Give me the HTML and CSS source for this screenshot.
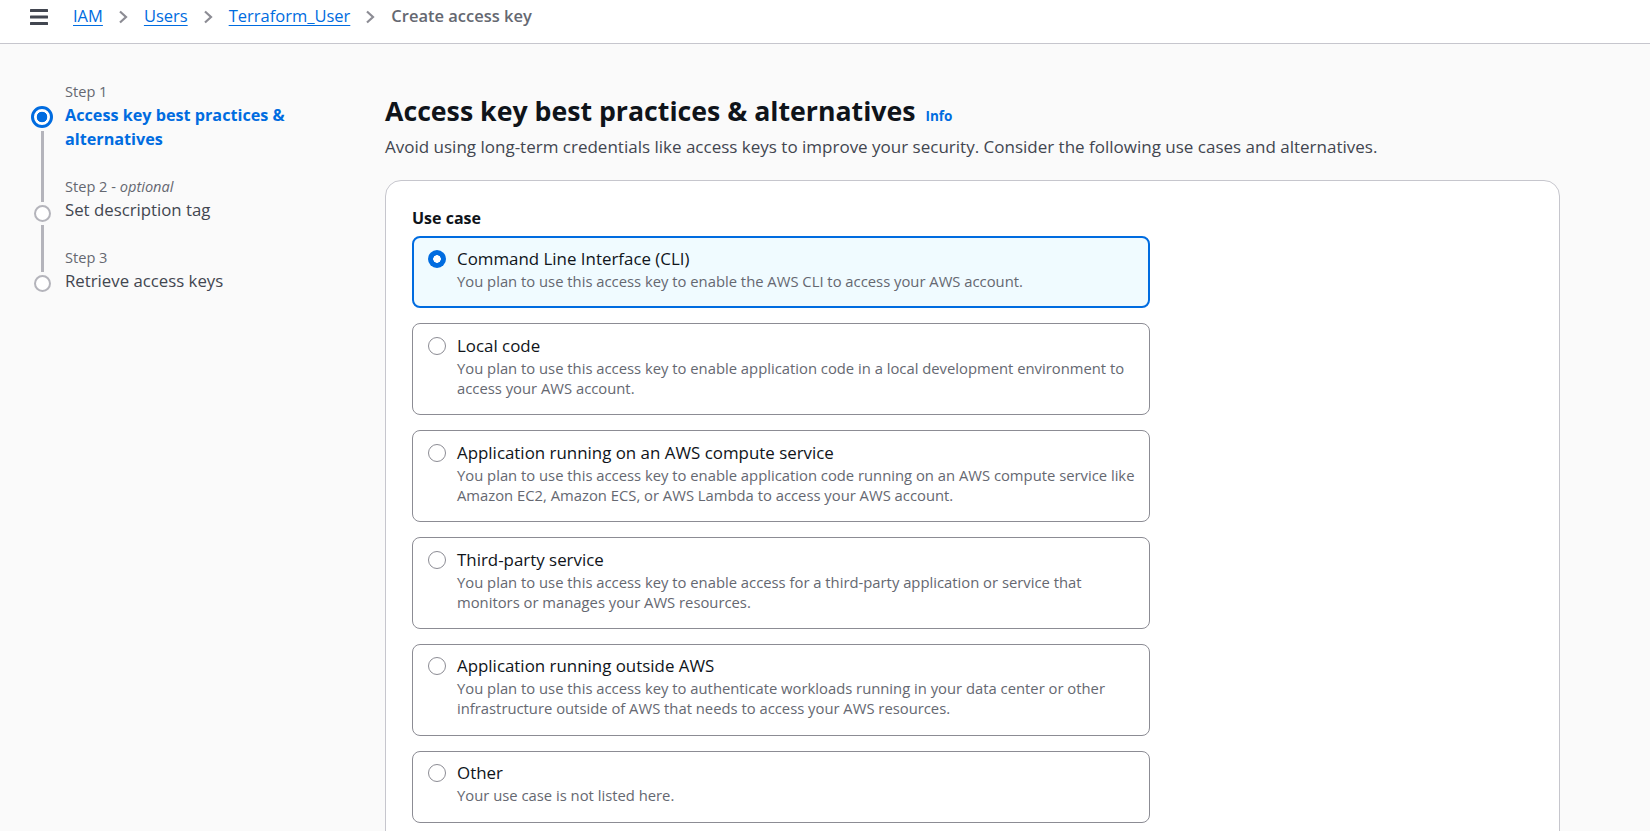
FILE: index.html
```html
<!DOCTYPE html>
<html lang="en">
<head>
<meta charset="utf-8">
<title>Create access key</title>
<link rel="stylesheet" href="styles.css">
</head>
<body>
<header class="topbar">
  <button class="menu" aria-label="Open navigation">
    <svg width="18" height="16" viewBox="0 0 18 16"><rect x="0" y="0" width="18" height="3" rx="0.5"/><rect x="0" y="6.5" width="18" height="3" rx="0.5"/><rect x="0" y="13" width="18" height="3" rx="0.5"/></svg>
  </button>
  <nav class="crumbs">
    <a class="crumb-link" href="#">IAM</a>
    <svg class="sep" viewBox="0 0 10 14"><polyline points="2,1.5 8,7 2,12.5"/></svg>
    <a class="crumb-link" href="#">Users</a>
    <svg class="sep" viewBox="0 0 10 14"><polyline points="2,1.5 8,7 2,12.5"/></svg>
    <a class="crumb-link" href="#">Terraform_User</a>
    <svg class="sep" viewBox="0 0 10 14"><polyline points="2,1.5 8,7 2,12.5"/></svg>
    <span class="crumb-current">Create access key</span>
  </nav>
</header>

<div class="layout">
  <aside class="steps">
    <ol>
      <li class="step step-active">
        <div class="ind"><span class="seg-up seg-hidden"></span><span class="dot"></span><span class="seg-down"></span></div>
        <div class="txt">
          <div class="step-label">Step 1</div>
          <div class="step-title">Access key best practices &amp; alternatives</div>
        </div>
      </li>
      <li class="step">
        <div class="ind"><span class="seg-up"></span><span class="dot"></span><span class="seg-down"></span></div>
        <div class="txt">
          <div class="step-label">Step 2 - <i>optional</i></div>
          <div class="step-title">Set description tag</div>
        </div>
      </li>
      <li class="step step-last">
        <div class="ind"><span class="seg-up seg-up-last"></span><span class="dot"></span></div>
        <div class="txt">
          <div class="step-label">Step 3</div>
          <div class="step-title">Retrieve access keys</div>
        </div>
      </li>
    </ol>
  </aside>

  <main class="content">
    <h1 class="page-title"><span>Access key best practices &amp; alternatives</span><a class="info" href="#">Info</a></h1>
    <p class="page-desc">Avoid using long-term credentials like access keys to improve your security. Consider the following use cases and alternatives.</p>

    <section class="panel">
      <div class="field-label">Use case</div>
      <div class="tiles">
        <label class="tile tile-selected">
          <span class="radio"></span>
          <span class="tile-text">
            <span class="tile-title">Command Line Interface (CLI)</span>
            <span class="tile-desc">You plan to use this access key to enable the AWS CLI to access your AWS account.</span>
          </span>
        </label>
        <label class="tile">
          <span class="radio"></span>
          <span class="tile-text">
            <span class="tile-title">Local code</span>
            <span class="tile-desc">You plan to use this access key to enable application code in a local development environment to access your AWS account.</span>
          </span>
        </label>
        <label class="tile">
          <span class="radio"></span>
          <span class="tile-text">
            <span class="tile-title">Application running on an AWS compute service</span>
            <span class="tile-desc">You plan to use this access key to enable application code running on an AWS compute service like Amazon EC2, Amazon ECS, or AWS Lambda to access your AWS account.</span>
          </span>
        </label>
        <label class="tile">
          <span class="radio"></span>
          <span class="tile-text">
            <span class="tile-title">Third-party service</span>
            <span class="tile-desc">You plan to use this access key to enable access for a third-party application or service that monitors or manages your AWS resources.</span>
          </span>
        </label>
        <label class="tile">
          <span class="radio"></span>
          <span class="tile-text">
            <span class="tile-title">Application running outside AWS</span>
            <span class="tile-desc">You plan to use this access key to authenticate workloads running in your data center or other infrastructure outside of AWS that needs to access your AWS resources.</span>
          </span>
        </label>
        <label class="tile">
          <span class="radio"></span>
          <span class="tile-text">
            <span class="tile-title">Other</span>
            <span class="tile-desc">Your use case is not listed here.</span>
          </span>
        </label>
      </div>
    </section>
  </main>
</div>
</body>
</html>
```

FILE: styles.css
```css
* { box-sizing: border-box; }

html { overflow: hidden; }

body {
  margin: 0;
  font-family: "Open Sans", "Noto Sans", sans-serif;
  background: #fafafa;
  color: #0f141a;
}

/* ---------- top bar ---------- */
.topbar {
  display: flex;
  align-items: flex-start;
  height: 44px;
  padding: 4px 0 0 30px;
  background: #ffffff;
  border-bottom: 1px solid #c6c6cd;
}

.menu {
  display: block;
  width: 18px;
  height: 16px;
  margin-top: 5px;
  padding: 0;
  border: 0;
  background: none;
}
.menu svg { display: block; fill: #424650; }

.crumbs {
  display: flex;
  align-items: flex-start;
  margin-left: 25px;
  font-size: 16.5px;
  line-height: 24px;
}

.crumb-link {
  color: #006ce0;
  text-decoration: underline;
  text-underline-offset: 3px;
  text-decoration-thickness: 1px;
}

.sep {
  width: 10px;
  height: 14px;
  margin: 6px 16px 0 15px;
  fill: none;
  stroke: #8c8c94;
  stroke-width: 2.2;
}

.crumb-current {
  color: #656871;
  font-weight: 600;
}

/* ---------- layout ---------- */
.layout {
  display: grid;
  grid-template-columns: 385px 1fr;
  padding-right: 90px;
}

/* ---------- steps ---------- */
.steps { padding: 35.4px 0 0 30px; }

.steps ol {
  list-style: none;
  margin: 0;
  padding: 0;
  width: 290px;
}

.step { display: flex; }

.ind {
  flex: 0 0 24px;
  display: flex;
  flex-direction: column;
  align-items: center;
  margin-right: 11px;
}

.seg-up {
  width: 3px;
  height: 27.4px;
  margin-bottom: 3px;
  background: #b4b4bb;
}
.seg-up-last { height: 26.4px; }
.seg-hidden { background: transparent; height: 26.4px; margin-bottom: 0; }

.seg-down {
  flex: 1;
  width: 3px;
  margin-top: 3px;
  background: #b4b4bb;
}

.dot {
  width: 17px;
  height: 17px;
  border: 2px solid #b4b4bb;
  border-radius: 50%;
  background: #ffffff;
}

.step-active .dot {
  width: 22px;
  height: 22px;
  border: 3px solid #006ce0;
  background: radial-gradient(circle, #006ce0 0 5px, #ffffff 5.6px);
}

.txt {
  flex: 1;
  padding-bottom: 23px;
}
.step-last .txt { padding-bottom: 0; }

.step-label {
  font-size: 14.6px;
  line-height: 24px;
  color: #656871;
}

.step-title {
  font-size: 16.8px;
  line-height: 24px;
  color: #424650;
}

.step-active .step-title {
  color: #006ce0;
  font-weight: 700;
  font-size: 16.2px;
}

/* ---------- main ---------- */
.content {
  padding-top: 49px;
  min-width: 0;
}

.page-title {
  display: flex;
  align-items: baseline;
  gap: 10px;
  margin: 0;
  font-size: 26.7px;
  line-height: 36px;
  font-weight: 700;
  color: #0f141a;
}

.info {
  font-size: 13.5px;
  line-height: 20px;
  font-weight: 700;
  color: #006ce0;
  text-decoration: none;
}

.page-desc {
  margin: 6px 0 0;
  font-size: 17px;
  line-height: 24px;
  color: #424650;
}

.panel {
  margin-top: 21px;
  padding: 26px 26px 40px;
  background: #ffffff;
  border: 1px solid #c6c6cd;
  border-radius: 16px;
}

.field-label {
  font-size: 16px;
  line-height: 22px;
  font-weight: 700;
  color: #0f141a;
}

.tiles {
  display: flex;
  flex-direction: column;
  gap: 15.2px;
  margin-top: 7px;
  width: 738px;
}

.tile {
  display: flex;
  align-items: flex-start;
  gap: 11px;
  padding: 10.6px 11px 16.2px 15px;
  border: 1px solid #8c8c94;
  border-radius: 8px;
  background: #ffffff;
}

.tile-selected {
  padding: 9.6px 10px 15.2px 14px;
  border: 2px solid #006ce0;
  background: #f0fbff;
}

.radio {
  flex: 0 0 18px;
  width: 18px;
  height: 18px;
  margin-top: 2px;
  border: 1.5px solid #8c8c94;
  border-radius: 50%;
  background: #ffffff;
}

.tile-selected .radio {
  border: 0;
  background: radial-gradient(circle, #ffffff 0 3.5px, #006ce0 4px);
}

.tile-text {
  display: flex;
  flex-direction: column;
  min-width: 0;
}

.tile-title {
  font-size: 16.9px;
  line-height: 22px;
  color: #0f141a;
}

.tile-desc {
  margin-top: 1px;
  font-size: 14.8px;
  line-height: 20px;
  color: #656871;
}
```
